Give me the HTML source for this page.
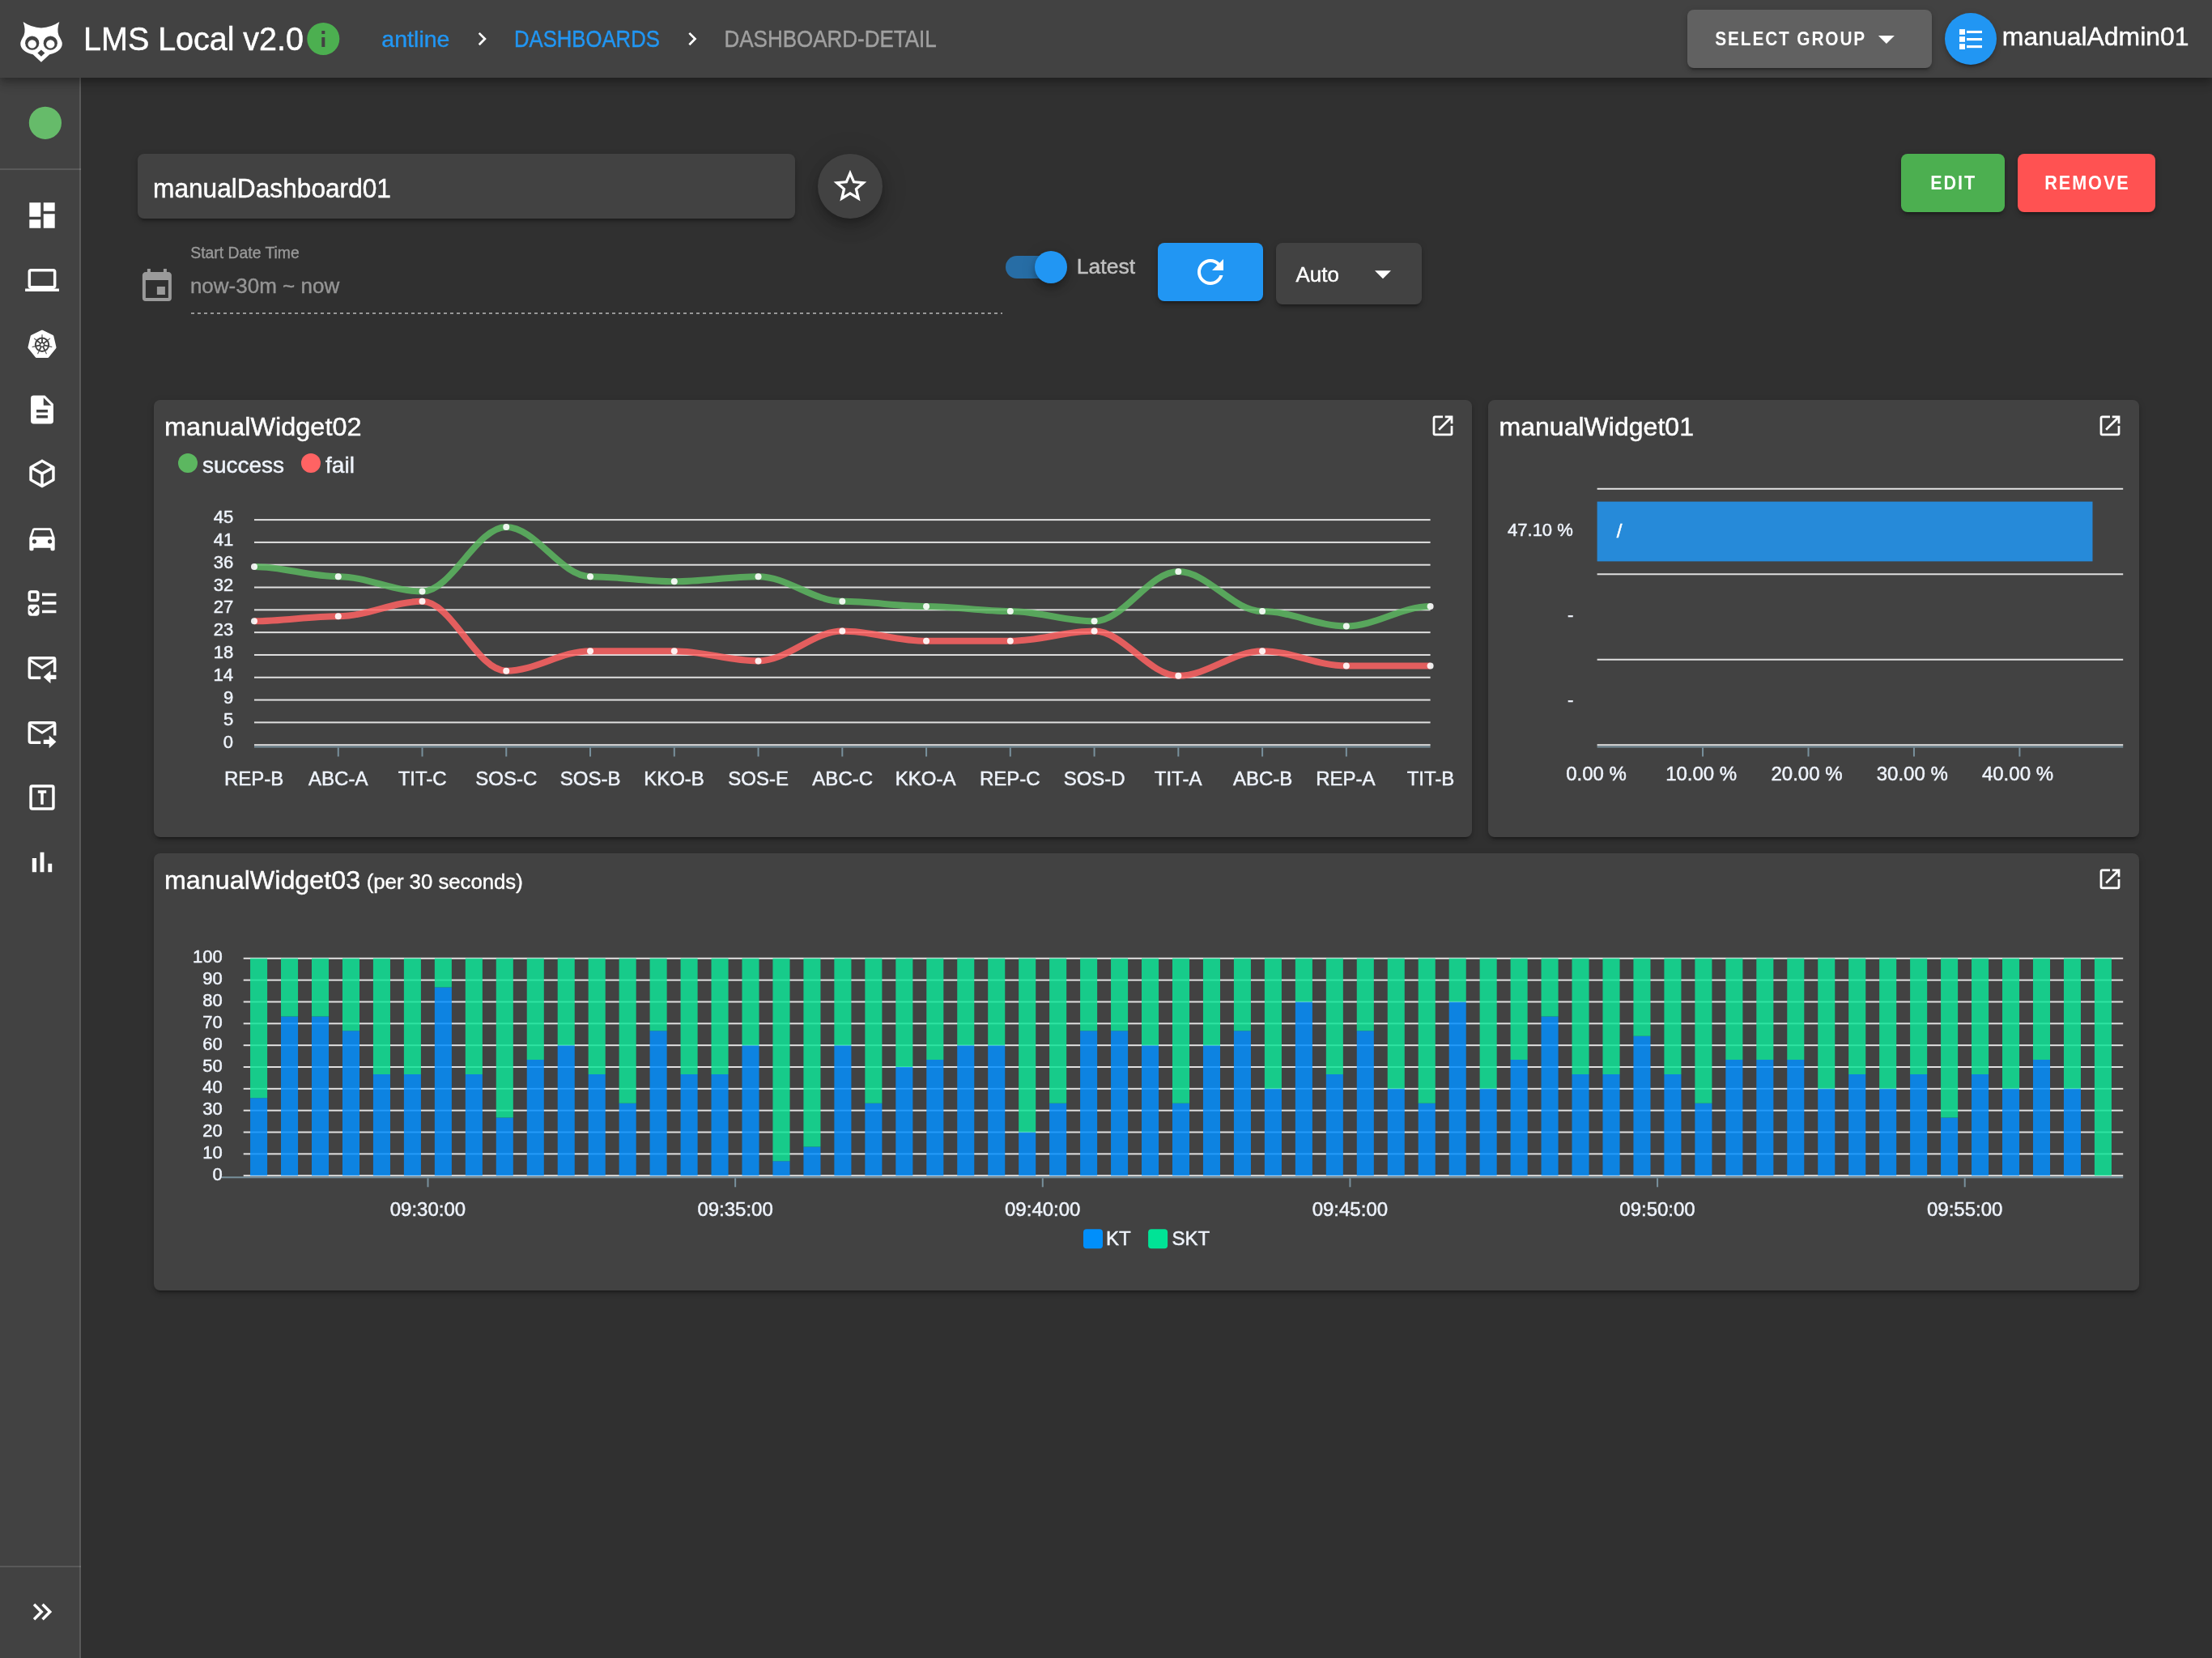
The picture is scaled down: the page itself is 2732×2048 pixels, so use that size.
<!DOCTYPE html>
<html lang="en"><head><meta charset="utf-8"><title>LMS Local v2.0 - Dashboard Detail</title>
<style>
html,body{margin:0;padding:0}
html{background:#303030}
body{width:2732px;height:2048px;overflow:hidden;position:relative;background:#303030;font-family:"Liberation Sans",sans-serif;color:#fff}
.a{position:absolute;box-sizing:border-box}
.s{background:#424242}
.e2{box-shadow:0 6px 2px -4px rgba(0,0,0,.2),0 4px 4px 0 rgba(0,0,0,.14),0 2px 10px 0 rgba(0,0,0,.12)}
.e4{box-shadow:0 4px 8px -2px rgba(0,0,0,.2),0 8px 10px 0 rgba(0,0,0,.14),0 2px 20px 0 rgba(0,0,0,.12)}
.e6{box-shadow:0 6px 10px -2px rgba(0,0,0,.2),0 12px 20px 0 rgba(0,0,0,.14),0 2px 36px 0 rgba(0,0,0,.12)}
.r8{border-radius:8px}
#ov{position:absolute;left:0;top:0;z-index:20;transform:translateZ(0);will-change:transform}
#ov text{font-family:"Liberation Sans",sans-serif;white-space:pre}
</style></head><body>
<nav class="a s" style="left:0;top:96px;width:100px;height:1952px;border-right:2px solid #595959;z-index:3">
 <div class="a" style="left:0;top:112px;width:100px;height:2px;background:rgba(255,255,255,.12)"></div>
 <div class="a" style="left:0;top:1838px;width:100px;height:2px;background:rgba(255,255,255,.12)"></div>
</nav>
<header class="a s e4" style="left:0;top:0;width:2732px;height:96px;z-index:5">
 <div class="a r8 e2" style="left:2084px;top:12px;width:302px;height:72px;background:#616161"></div>
 <div class="a e2" style="left:2402px;top:16px;width:64px;height:64px;border-radius:50%;background:#2196F3"></div>
</header>
<main>
 <div class="a s r8 e2" style="left:170px;top:190px;width:812px;height:80px"></div>
 <div class="a s e6" style="left:1010px;top:190px;width:80px;height:80px;border-radius:50%"></div>
 <div class="a r8 e2" style="left:2348px;top:190px;width:128px;height:72px;background:#4CAF50"></div>
 <div class="a r8 e2" style="left:2492px;top:190px;width:170px;height:72px;background:#FF5252"></div>
 <div class="a" style="left:236px;top:386px;width:1002px;height:2px;background:repeating-linear-gradient(to right,#979797 0,#979797 4px,transparent 4px,transparent 8px)"></div>
 <div class="a" style="left:1242px;top:316px;width:72px;height:28px;border-radius:14px;background:#276da5"></div>
 <div class="a e4" style="left:1278px;top:310px;width:40px;height:40px;border-radius:50%;background:#2196F3"></div>
 <div class="a r8 e2" style="left:1430px;top:300px;width:130px;height:72px;background:#2196F3"></div>
 <div class="a s r8 e2" style="left:1576px;top:300px;width:180px;height:76px"></div>
 <section class="a s r8 e2" style="left:190px;top:494px;width:1628px;height:540px"></section>
 <section class="a s r8 e2" style="left:1838px;top:494px;width:804px;height:540px"></section>
 <section class="a s r8 e2" style="left:190px;top:1054px;width:2452px;height:540px"></section>
</main>
<svg id="ov" width="2732" height="2048" viewBox="0 0 2732 2048">
<text transform="translate(103.12,61.95) scale(0.9575,1)" fill="#fff" stroke="#fff" stroke-width="0.53" style="font-size:41.19px;">LMS Local v2.0</text>
<text transform="translate(471.37,57.90) scale(1.0202,1)" fill="#2196F3" stroke="#2196F3" stroke-width="0.42" style="font-size:28.0px;">antline</text>
<text transform="translate(634.98,57.90) scale(0.8878,1)" fill="#2196F3" stroke="#2196F3" stroke-width="0.43" style="font-size:28.94px;">DASHBOARDS</text>
<text transform="translate(894.46,57.90) scale(0.8981,1)" fill="#a0a0a0" stroke="#a0a0a0" stroke-width="0.43" style="font-size:28.94px;">DASHBOARD-DETAIL</text>
<text transform="translate(2118.26,56.15) scale(0.8689,1)" fill="#fff" style="font-size:23.98px;font-weight:700;letter-spacing:2.158px;">SELECT GROUP</text>
<text transform="translate(2472.82,55.60) scale(0.9920,1)" fill="#fff" stroke="#fff" stroke-width="0.46" style="font-size:32.19px;">manualAdmin01</text>
<path fill="#fff" d="M28.6,26.9 Q38.5,33.8 50.9,34.4 Q63.3,33.8 73.3,26.9 Q69.8,37 72.6,44 Q76.2,50 76.8,53 Q77.2,63.5 61.2,67.2 L50.9,76.8 L40.7,67.2 Q24.8,63.5 25.3,53 Q25.8,50 29.4,44 Q32.2,37 28.6,26.9 Z"/>
<circle cx="39.7" cy="53.2" r="8.6" fill="#424242"/><circle cx="39.7" cy="54.4" r="5.2" fill="#fff"/>
<circle cx="62.3" cy="53.2" r="8.6" fill="#424242"/><circle cx="62.3" cy="54.4" r="5.2" fill="#fff"/>
<path fill="#424242" d="M50.9,61.4 L55.4,65.5 L50.9,69.7 L46.4,65.5 Z"/>
<path transform="translate(375.30,24.00) scale(2.0000)" fill="#4CAF50"  d="M13,9H11V7H13M13,17H11V11H13M12,2A10,10 0 0,0 2,12A10,10 0 0,0 12,22A10,10 0 0,0 22,12A10,10 0 0,0 12,2Z"/>
<path transform="translate(579.08,31.73) scale(1.3600)" fill="#fff"  d="M8.59,16.58L13.17,12L8.59,7.41L10,6L16,12L10,18L8.59,16.58Z"/>
<path transform="translate(838.68,31.73) scale(1.3600)" fill="#fff"  d="M8.59,16.58L13.17,12L8.59,7.41L10,6L16,12L10,18L8.59,16.58Z"/>
<path transform="translate(2305.90,23.90) scale(2.0000)" fill="#fff"  d="M7,10L12,15L17,10H7Z"/>
<rect x="2420" y="36.1" width="7" height="6.7" fill="#fff"/>
<rect x="2420" y="45.1" width="7" height="6.7" fill="#fff"/>
<rect x="2420" y="54.2" width="7" height="6.8" fill="#fff"/>
<rect x="2429" y="37.9" width="19" height="3.1" fill="#fff"/>
<rect x="2429" y="47.0" width="19" height="3.1" fill="#fff"/>
<rect x="2429" y="56.05" width="19" height="3.1" fill="#fff"/>
<circle cx="55.9" cy="151.8" r="20.1" fill="#66BB6A"/>
<path transform="translate(31.10,245.10) scale(1.7417)" fill="#fff"  d="M13,3V9H21V3M13,21H21V11H13M3,21H11V15H3M3,13H11V3H3V13Z"/>
<path transform="translate(31.10,325.10) scale(1.7417)" fill="#fff"  d="M4,6H20V16H4M20,18A2,2 0 0,0 22,16V6C22,4.89 21.1,4 20,4H4C2.89,4 2,4.89 2,6V16A2,2 0 0,0 4,18H0V20H24V18H20Z"/>
<polygon fill="#fff" stroke="#fff" stroke-width="3" stroke-linejoin="round" points="52.0,409.2 64.8,415.4 68.0,429.2 59.1,440.4 44.9,440.4 36.0,429.2 39.2,415.4"/>
<circle cx="52.0" cy="425.8" r="8.2" fill="none" stroke="#424242" stroke-width="2"/>
<line x1="52.0" y1="423.6" x2="52.0" y2="417.6" stroke="#424242" stroke-width="1.8"/>
<line x1="52.0" y1="417.6" x2="52.0" y2="413.2" stroke="#424242" stroke-width="1.2" stroke-opacity="0.85"/>
<line x1="53.7" y1="424.4" x2="58.4" y2="420.7" stroke="#424242" stroke-width="1.8"/>
<line x1="58.4" y1="420.7" x2="61.9" y2="417.9" stroke="#424242" stroke-width="1.2" stroke-opacity="0.85"/>
<line x1="54.1" y1="426.3" x2="60.0" y2="427.6" stroke="#424242" stroke-width="1.8"/>
<line x1="60.0" y1="427.6" x2="64.3" y2="428.6" stroke="#424242" stroke-width="1.2" stroke-opacity="0.85"/>
<line x1="53.0" y1="427.8" x2="55.6" y2="433.2" stroke="#424242" stroke-width="1.8"/>
<line x1="55.6" y1="433.2" x2="57.5" y2="437.2" stroke="#424242" stroke-width="1.2" stroke-opacity="0.85"/>
<line x1="51.0" y1="427.8" x2="48.4" y2="433.2" stroke="#424242" stroke-width="1.8"/>
<line x1="48.4" y1="433.2" x2="46.5" y2="437.2" stroke="#424242" stroke-width="1.2" stroke-opacity="0.85"/>
<line x1="49.9" y1="426.3" x2="44.0" y2="427.6" stroke="#424242" stroke-width="1.8"/>
<line x1="44.0" y1="427.6" x2="39.7" y2="428.6" stroke="#424242" stroke-width="1.2" stroke-opacity="0.85"/>
<line x1="50.3" y1="424.4" x2="45.6" y2="420.7" stroke="#424242" stroke-width="1.8"/>
<line x1="45.6" y1="420.7" x2="42.1" y2="417.9" stroke="#424242" stroke-width="1.2" stroke-opacity="0.85"/>
<circle cx="52.0" cy="425.8" r="2.6" fill="none" stroke="#424242" stroke-width="1.4"/>
<path transform="translate(31.10,485.10) scale(1.7417)" fill="#fff"  d="M14,2H6A2,2 0 0,0 4,4V20A2,2 0 0,0 6,22H18A2,2 0 0,0 20,20V8L14,2M16,18H8V16H16V18M16,14H8V12H16V14M13,9V3.5L18.5,9H13Z"/>
<path transform="translate(31.10,564.10) scale(1.7417)" fill="#fff"  d="M21,16.5C21,16.88 20.79,17.21 20.47,17.38L12.57,21.82C12.41,21.94 12.21,22 12,22C11.79,22 11.59,21.94 11.43,21.82L3.53,17.38C3.21,17.21 3,16.88 3,16.5V7.5C3,7.12 3.21,6.79 3.53,6.62L11.43,2.18C11.59,2.06 11.79,2 12,2C12.21,2 12.41,2.06 12.57,2.18L20.47,6.62C20.79,6.79 21,7.12 21,7.5V16.5M12,4.15L6.04,7.5L12,10.85L17.96,7.5L12,4.15M5,15.91L11,19.29V12.58L5,9.21V15.91M19,15.91V9.21L13,12.58V19.29L19,15.91Z"/>
<path transform="translate(31.10,643.60) scale(1.7417)" fill="#fff"  d="M5,11L6.5,6.5H17.5L19,11M17.5,16A1.5,1.5 0 0,1 16,14.5A1.5,1.5 0 0,1 17.5,13A1.5,1.5 0 0,1 19,14.5A1.5,1.5 0 0,1 17.5,16M6.5,16A1.5,1.5 0 0,1 5,14.5A1.5,1.5 0 0,1 6.5,13A1.5,1.5 0 0,1 8,14.5A1.5,1.5 0 0,1 6.5,16M18.92,6C18.72,5.42 18.16,5 17.5,5H6.5C5.84,5 5.28,5.42 5.08,6L3,12V20A1,1 0 0,0 4,21H5A1,1 0 0,0 6,20V19H18V20A1,1 0 0,0 19,21H20A1,1 0 0,0 21,20V12L18.92,6Z"/>
<path transform="translate(31.10,724.10) scale(1.7417)" fill="#fff" fill-rule="evenodd" d="M4 13C2.89 13 2 13.89 2 15V19C2 20.11 2.89 21 4 21H8C9.11 21 10 20.11 10 19V15C10 13.89 9.11 13 8 13M8.2 14.5L9.26 15.55L5.27 19.5L2.74 16.95L3.81 15.9L5.28 17.39M4 3C2.89 3 2 3.89 2 5V9C2 10.11 2.89 11 4 11H8C9.11 11 10 10.11 10 9V5C10 3.89 9.11 3 8 3M4 5H8V9H4M12 5H22V7H12M12 19V17H22V19M12 11H22V13H12Z"/>
<path transform="translate(31.10,804.10) scale(1.7417)" fill="#fff" fill-rule="evenodd" d="M22 20H18V23L13 18.5L18 14V17H22V20Z M20 4H4A2 2 0 0 0 2 6V18A2 2 0 0 0 4 20H11V18H4V8L12 13L20 8V15H22V6A2 2 0 0 0 20 4M20 6L12 11L4 6Z"/>
<path transform="translate(31.10,884.10) scale(1.7417)" fill="#fff" fill-rule="evenodd" d="M13 17H17V14L22 18.5L17 23V20H13V17Z M20 4H4A2 2 0 0 0 2 6V18A2 2 0 0 0 4 20H11V18H4V8L12 13L20 8V14H22V6A2 2 0 0 0 20 4M20 6L12 11L4 6Z"/>
<path transform="translate(31.10,964.10) scale(1.7417)" fill="#fff" fill-rule="evenodd" d="M9,7V9H11V17H13V9H15V7H9M5,3H19A2,2 0 0,1 21,5V19A2,2 0 0,1 19,21H5A2,2 0 0,1 3,19V5A2,2 0 0,1 5,3M5,5V19H19V5H5Z"/>
<path transform="translate(31.10,1044.10) scale(1.7417)" fill="#fff"  d="M5 9.2h3V19H5zM10.6 5h2.8v14h-2.8zm5.6 8H19v6h-2.8z"/>
<path transform="translate(31.10,1970.10) scale(1.7417)" fill="#fff"  d="M5.59,7.41L7,6L13,12L7,18L5.59,16.59L10.17,12L5.59,7.41M11.59,7.41L13,6L19,12L13,18L11.59,16.59L16.17,12L11.59,7.41Z"/>
<text transform="translate(189.04,243.70) scale(0.9553,1)" fill="#fff" stroke="#fff" stroke-width="0.47" style="font-size:33.15px;">manualDashboard01</text>
<path transform="translate(1025.46,205.60) scale(2.0417)" fill="#fff"  d="M12,15.39L8.24,17.66L9.23,13.38L5.91,10.5L10.29,10.13L12,6.09L13.71,10.13L18.09,10.5L14.77,13.38L15.76,17.66M22,9.24L14.81,8.63L12,2L9.19,8.63L2,9.24L7.45,13.97L5.82,21L12,17.27L18.18,21L16.54,13.97L22,9.24Z"/>
<text transform="translate(2384.15,234.20) scale(0.8994,1)" fill="#fff" style="font-size:23.98px;font-weight:700;letter-spacing:2.158px;">EDIT</text>
<text transform="translate(2525.14,234.20) scale(0.9037,1)" fill="#fff" style="font-size:23.98px;font-weight:700;letter-spacing:2.158px;">REMOVE</text>
<path transform="translate(169.90,330.00) scale(2.0000)" fill="#9a9a9a"  d="M19,19H5V8H19M16,1V3H8V1H6V3H5C3.89,3 3,3.89 3,5V19A2,2 0 0,0 5,21H19A2,2 0 0,0 21,19V5C21,3.89 20.1,3 19,3H18V1M17,12H12V17H17V12Z"/>
<text transform="translate(235.22,318.80) scale(0.9789,1)" fill="#999999" stroke="#999999" stroke-width="0.36" style="font-size:19.8px;">Start Date Time</text>
<text transform="translate(234.88,362.10) scale(1.0002,1)" fill="#959595" stroke="#959595" stroke-width="0.41" style="font-size:26.0px;">now-30m ~ now</text>
<text transform="translate(1329.87,337.80) scale(1.0078,1)" fill="#c1c1c1" stroke="#c1c1c1" stroke-width="0.41" style="font-size:26.29px;">Latest</text>
<path transform="translate(1471.00,312.00) scale(2.0000)" fill="#fff"  d="M17.65,6.35C16.2,4.9 14.21,4 12,4A8,8 0 0,0 4,12A8,8 0 0,0 12,20C15.73,20 18.84,17.45 19.73,14H17.65C16.83,16.33 14.61,18 12,18A6,6 0 0,1 6,12A6,6 0 0,1 12,6C13.66,6 15.14,6.69 16.22,7.78L13,11H20V4L17.65,6.35Z"/>
<text transform="translate(1600.60,348.10) scale(0.9780,1)" fill="#fff" stroke="#fff" stroke-width="0.41" style="font-size:26.44px;">Auto</text>
<path transform="translate(1684.00,314.30) scale(2.0000)" fill="#fff"  d="M7,10L12,15L17,10H7Z"/>
<text transform="translate(203.09,537.80) scale(1.0083,1)" fill="#fff" stroke="#fff" stroke-width="0.46" style="font-size:32.18px;">manualWidget02</text>
<text transform="translate(1851.51,537.80) scale(0.9960,1)" fill="#fff" stroke="#fff" stroke-width="0.46" style="font-size:32.18px;">manualWidget01</text>
<text transform="translate(203.00,1097.60) scale(1.0026,1)" fill="#fff" stroke="#fff" stroke-width="0.46" style="font-size:32.18px;">manualWidget03</text>
<text transform="translate(452.69,1097.60) scale(1.0061,1)" fill="#fff" stroke="#fff" stroke-width="0.4" style="font-size:25.6px;">(per 30 seconds)</text>
<path transform="translate(1765.50,509.40) scale(1.3750)" fill="#fff"  d="M14,3V5H17.59L7.76,14.83L9.17,16.24L19,6.41V10H21V3M19,19H5V5H12V3H5C3.89,3 3,3.9 3,5V19A2,2 0 0,0 5,21H19A2,2 0 0,0 21,19V12H19V19Z"/>
<path transform="translate(2589.50,509.40) scale(1.3750)" fill="#fff"  d="M14,3V5H17.59L7.76,14.83L9.17,16.24L19,6.41V10H21V3M19,19H5V5H12V3H5C3.89,3 3,3.9 3,5V19A2,2 0 0,0 5,21H19A2,2 0 0,0 21,19V12H19V19Z"/>
<path transform="translate(2589.50,1069.40) scale(1.3750)" fill="#fff"  d="M14,3V5H17.59L7.76,14.83L9.17,16.24L19,6.41V10H21V3M19,19H5V5H12V3H5C3.89,3 3,3.9 3,5V19A2,2 0 0,0 5,21H19A2,2 0 0,0 21,19V12H19V19Z"/>
<circle cx="232" cy="572" r="12" fill="#5cb760"/>
<text x="249.90" y="583.70" fill="#eef3fb" stroke="#eef3fb" stroke-width="0.5" text-anchor="start" style="font-size:28px">success</text>
<circle cx="383.95" cy="572" r="12" fill="#ff6363"/>
<text x="402.07" y="583.70" fill="#eef3fb" stroke="#eef3fb" stroke-width="0.5" text-anchor="start" style="font-size:28px">fail</text>
<rect x="314.0" y="641.10" width="1452.6" height="2" fill="#e0e0e0"/>
<rect x="314.0" y="668.91" width="1452.6" height="2" fill="#e0e0e0"/>
<rect x="314.0" y="696.72" width="1452.6" height="2" fill="#e0e0e0"/>
<rect x="314.0" y="724.53" width="1452.6" height="2" fill="#e0e0e0"/>
<rect x="314.0" y="752.34" width="1452.6" height="2" fill="#e0e0e0"/>
<rect x="314.0" y="780.15" width="1452.6" height="2" fill="#e0e0e0"/>
<rect x="314.0" y="807.96" width="1452.6" height="2" fill="#e0e0e0"/>
<rect x="314.0" y="835.77" width="1452.6" height="2" fill="#e0e0e0"/>
<rect x="314.0" y="863.58" width="1452.6" height="2" fill="#e0e0e0"/>
<rect x="314.0" y="891.39" width="1452.6" height="2" fill="#e0e0e0"/>
<rect x="314.0" y="919.20" width="1452.6" height="2" fill="#e0e0e0"/>
<rect x="314.0" y="921.5" width="1452.6" height="2" fill="#78909C"/>
<text x="263.73" y="646.20" fill="#eef3fb" stroke="#eef3fb" stroke-width="0.5" text-anchor="start" style="font-size:22px">45</text>
<text x="263.85" y="674.01" fill="#eef3fb" stroke="#eef3fb" stroke-width="0.5" text-anchor="start" style="font-size:22px">41</text>
<text x="263.73" y="701.82" fill="#eef3fb" stroke="#eef3fb" stroke-width="0.5" text-anchor="start" style="font-size:22px">36</text>
<text x="263.85" y="729.63" fill="#eef3fb" stroke="#eef3fb" stroke-width="0.5" text-anchor="start" style="font-size:22px">32</text>
<text x="263.85" y="757.44" fill="#eef3fb" stroke="#eef3fb" stroke-width="0.5" text-anchor="start" style="font-size:22px">27</text>
<text x="263.73" y="785.25" fill="#eef3fb" stroke="#eef3fb" stroke-width="0.5" text-anchor="start" style="font-size:22px">23</text>
<text x="263.73" y="813.06" fill="#eef3fb" stroke="#eef3fb" stroke-width="0.5" text-anchor="start" style="font-size:22px">18</text>
<text x="263.48" y="840.87" fill="#eef3fb" stroke="#eef3fb" stroke-width="0.5" text-anchor="start" style="font-size:22px">14</text>
<text x="276.10" y="868.68" fill="#eef3fb" stroke="#eef3fb" stroke-width="0.5" text-anchor="start" style="font-size:22px">9</text>
<text x="275.98" y="896.49" fill="#eef3fb" stroke="#eef3fb" stroke-width="0.5" text-anchor="start" style="font-size:22px">5</text>
<text x="275.85" y="924.30" fill="#eef3fb" stroke="#eef3fb" stroke-width="0.5" text-anchor="start" style="font-size:22px">0</text>
<text x="277.00" y="969.80" fill="#eef3fb" stroke="#eef3fb" stroke-width="0.5" text-anchor="start" style="font-size:24px">REP-B</text>
<rect x="416.76" y="923.5" width="2" height="11" fill="#78909C"/>
<text x="381.07" y="969.80" fill="#eef3fb" stroke="#eef3fb" stroke-width="0.5" text-anchor="start" style="font-size:24px">ABC-A</text>
<rect x="520.51" y="923.5" width="2" height="11" fill="#78909C"/>
<text x="491.70" y="969.80" fill="#eef3fb" stroke="#eef3fb" stroke-width="0.5" text-anchor="start" style="font-size:24px">TIT-C</text>
<rect x="624.27" y="923.5" width="2" height="11" fill="#78909C"/>
<text x="587.21" y="969.80" fill="#eef3fb" stroke="#eef3fb" stroke-width="0.5" text-anchor="start" style="font-size:24px">SOS-C</text>
<rect x="728.03" y="923.5" width="2" height="11" fill="#78909C"/>
<text x="691.84" y="969.80" fill="#eef3fb" stroke="#eef3fb" stroke-width="0.5" text-anchor="start" style="font-size:24px">SOS-B</text>
<rect x="831.79" y="923.5" width="2" height="11" fill="#78909C"/>
<text x="795.16" y="969.80" fill="#eef3fb" stroke="#eef3fb" stroke-width="0.5" text-anchor="start" style="font-size:24px">KKO-B</text>
<rect x="935.54" y="923.5" width="2" height="11" fill="#78909C"/>
<text x="899.23" y="969.80" fill="#eef3fb" stroke="#eef3fb" stroke-width="0.5" text-anchor="start" style="font-size:24px">SOS-E</text>
<rect x="1039.30" y="923.5" width="2" height="11" fill="#78909C"/>
<text x="1003.36" y="969.80" fill="#eef3fb" stroke="#eef3fb" stroke-width="0.5" text-anchor="start" style="font-size:24px">ABC-C</text>
<rect x="1143.06" y="923.5" width="2" height="11" fill="#78909C"/>
<text x="1105.81" y="969.80" fill="#eef3fb" stroke="#eef3fb" stroke-width="0.5" text-anchor="start" style="font-size:24px">KKO-A</text>
<rect x="1246.81" y="923.5" width="2" height="11" fill="#78909C"/>
<text x="1209.94" y="969.80" fill="#eef3fb" stroke="#eef3fb" stroke-width="0.5" text-anchor="start" style="font-size:24px">REP-C</text>
<rect x="1350.57" y="923.5" width="2" height="11" fill="#78909C"/>
<text x="1313.63" y="969.80" fill="#eef3fb" stroke="#eef3fb" stroke-width="0.5" text-anchor="start" style="font-size:24px">SOS-D</text>
<rect x="1454.33" y="923.5" width="2" height="11" fill="#78909C"/>
<text x="1425.77" y="969.80" fill="#eef3fb" stroke="#eef3fb" stroke-width="0.5" text-anchor="start" style="font-size:24px">TIT-A</text>
<rect x="1558.09" y="923.5" width="2" height="11" fill="#78909C"/>
<text x="1523.02" y="969.80" fill="#eef3fb" stroke="#eef3fb" stroke-width="0.5" text-anchor="start" style="font-size:24px">ABC-B</text>
<rect x="1661.84" y="923.5" width="2" height="11" fill="#78909C"/>
<text x="1625.22" y="969.80" fill="#eef3fb" stroke="#eef3fb" stroke-width="0.5" text-anchor="start" style="font-size:24px">REP-A</text>
<text x="1737.66" y="969.80" fill="#eef3fb" stroke="#eef3fb" stroke-width="0.5" text-anchor="start" style="font-size:24px">TIT-B</text>
<path d="M314.00,699.92 C350.31,699.92 381.44,712.18 417.76,712.18 C454.07,712.18 485.20,730.57 521.51,730.57 C557.83,730.57 588.96,650.88 625.27,650.88 C661.59,650.88 692.71,712.18 729.03,712.18 C765.34,712.18 796.47,718.31 832.79,718.31 C869.10,718.31 900.23,712.18 936.54,712.18 C972.86,712.18 1003.98,742.83 1040.30,742.83 C1076.62,742.83 1107.74,748.96 1144.06,748.96 C1180.37,748.96 1211.50,755.09 1247.81,755.09 C1284.13,755.09 1315.26,767.35 1351.57,767.35 C1387.89,767.35 1419.01,706.05 1455.33,706.05 C1491.64,706.05 1522.77,755.09 1559.09,755.09 C1595.40,755.09 1626.53,773.48 1662.84,773.48 C1699.16,773.48 1730.28,748.96 1766.60,748.96" fill="none" stroke="#5cb760" stroke-opacity="0.85" stroke-width="8" stroke-linecap="butt"/>
<path d="M314.00,767.35 C350.31,767.35 381.44,761.22 417.76,761.22 C454.07,761.22 485.20,742.83 521.51,742.83 C557.83,742.83 588.96,828.65 625.27,828.65 C661.59,828.65 692.71,804.13 729.03,804.13 C765.34,804.13 796.47,804.13 832.79,804.13 C869.10,804.13 900.23,816.39 936.54,816.39 C972.86,816.39 1003.98,779.61 1040.30,779.61 C1076.62,779.61 1107.74,791.87 1144.06,791.87 C1180.37,791.87 1211.50,791.87 1247.81,791.87 C1284.13,791.87 1315.26,779.61 1351.57,779.61 C1387.89,779.61 1419.01,834.78 1455.33,834.78 C1491.64,834.78 1522.77,804.13 1559.09,804.13 C1595.40,804.13 1626.53,822.52 1662.84,822.52 C1699.16,822.52 1730.28,822.52 1766.60,822.52" fill="none" stroke="#ff6363" stroke-opacity="0.85" stroke-width="8" stroke-linecap="butt"/>
<circle cx="314.00" cy="699.92" r="4" fill="#fff" fill-opacity="0.9"/>
<circle cx="417.76" cy="712.18" r="4" fill="#fff" fill-opacity="0.9"/>
<circle cx="521.51" cy="730.57" r="4" fill="#fff" fill-opacity="0.9"/>
<circle cx="625.27" cy="650.88" r="4" fill="#fff" fill-opacity="0.9"/>
<circle cx="729.03" cy="712.18" r="4" fill="#fff" fill-opacity="0.9"/>
<circle cx="832.79" cy="718.31" r="4" fill="#fff" fill-opacity="0.9"/>
<circle cx="936.54" cy="712.18" r="4" fill="#fff" fill-opacity="0.9"/>
<circle cx="1040.30" cy="742.83" r="4" fill="#fff" fill-opacity="0.9"/>
<circle cx="1144.06" cy="748.96" r="4" fill="#fff" fill-opacity="0.9"/>
<circle cx="1247.81" cy="755.09" r="4" fill="#fff" fill-opacity="0.9"/>
<circle cx="1351.57" cy="767.35" r="4" fill="#fff" fill-opacity="0.9"/>
<circle cx="1455.33" cy="706.05" r="4" fill="#fff" fill-opacity="0.9"/>
<circle cx="1559.09" cy="755.09" r="4" fill="#fff" fill-opacity="0.9"/>
<circle cx="1662.84" cy="773.48" r="4" fill="#fff" fill-opacity="0.9"/>
<circle cx="1766.60" cy="748.96" r="4" fill="#fff" fill-opacity="0.9"/>
<circle cx="314.00" cy="767.35" r="4" fill="#fff" fill-opacity="0.9"/>
<circle cx="417.76" cy="761.22" r="4" fill="#fff" fill-opacity="0.9"/>
<circle cx="521.51" cy="742.83" r="4" fill="#fff" fill-opacity="0.9"/>
<circle cx="625.27" cy="828.65" r="4" fill="#fff" fill-opacity="0.9"/>
<circle cx="729.03" cy="804.13" r="4" fill="#fff" fill-opacity="0.9"/>
<circle cx="832.79" cy="804.13" r="4" fill="#fff" fill-opacity="0.9"/>
<circle cx="936.54" cy="816.39" r="4" fill="#fff" fill-opacity="0.9"/>
<circle cx="1040.30" cy="779.61" r="4" fill="#fff" fill-opacity="0.9"/>
<circle cx="1144.06" cy="791.87" r="4" fill="#fff" fill-opacity="0.9"/>
<circle cx="1247.81" cy="791.87" r="4" fill="#fff" fill-opacity="0.9"/>
<circle cx="1351.57" cy="779.61" r="4" fill="#fff" fill-opacity="0.9"/>
<circle cx="1455.33" cy="834.78" r="4" fill="#fff" fill-opacity="0.9"/>
<circle cx="1559.09" cy="804.13" r="4" fill="#fff" fill-opacity="0.9"/>
<circle cx="1662.84" cy="822.52" r="4" fill="#fff" fill-opacity="0.9"/>
<circle cx="1766.60" cy="822.52" r="4" fill="#fff" fill-opacity="0.9"/>
<rect x="1972.6" y="602.80" width="649.6" height="2" fill="#e0e0e0"/>
<rect x="1972.6" y="708.27" width="649.6" height="2" fill="#e0e0e0"/>
<rect x="1972.6" y="813.74" width="649.6" height="2" fill="#e0e0e0"/>
<rect x="1972.6" y="919.21" width="649.6" height="2" fill="#e0e0e0"/>
<rect x="1972.6" y="921.5" width="649.6" height="2" fill="#78909C"/>
<rect x="1972.6" y="619.6" width="611.9" height="73.8" fill="#2196F3" fill-opacity="0.85"/>
<text x="1996.85" y="664.00" fill="#fff" stroke="#fff" stroke-width="0.5" text-anchor="start" style="font-size:24px">/</text>
<text x="1862.05" y="662.30" fill="#eef3fb" stroke="#eef3fb" stroke-width="0.5" text-anchor="start" style="font-size:22px">47.10 %</text>
<text x="1935.97" y="767.20" fill="#eef3fb" stroke="#eef3fb" stroke-width="0.5" text-anchor="start" style="font-size:22px">-</text>
<text x="1935.97" y="872.30" fill="#eef3fb" stroke="#eef3fb" stroke-width="0.5" text-anchor="start" style="font-size:22px">-</text>
<text x="1934.22" y="964.10" fill="#eef3fb" stroke="#eef3fb" stroke-width="0.5" text-anchor="start" style="font-size:24px">0.00 %</text>
<rect x="2102.05" y="923.5" width="2" height="11" fill="#78909C"/>
<text x="2057.15" y="964.10" fill="#eef3fb" stroke="#eef3fb" stroke-width="0.5" text-anchor="start" style="font-size:24px">10.00 %</text>
<rect x="2232.50" y="923.5" width="2" height="11" fill="#78909C"/>
<text x="2187.51" y="964.10" fill="#eef3fb" stroke="#eef3fb" stroke-width="0.5" text-anchor="start" style="font-size:24px">20.00 %</text>
<rect x="2362.95" y="923.5" width="2" height="11" fill="#78909C"/>
<text x="2317.69" y="964.10" fill="#eef3fb" stroke="#eef3fb" stroke-width="0.5" text-anchor="start" style="font-size:24px">30.00 %</text>
<rect x="2493.40" y="923.5" width="2" height="11" fill="#78909C"/>
<text x="2447.93" y="964.10" fill="#eef3fb" stroke="#eef3fb" stroke-width="0.5" text-anchor="start" style="font-size:24px">40.00 %</text>
<rect x="300.7" y="1182.80" width="2321.5" height="2" fill="#e0e0e0"/>
<rect x="300.7" y="1209.64" width="2321.5" height="2" fill="#e0e0e0"/>
<rect x="300.7" y="1236.48" width="2321.5" height="2" fill="#e0e0e0"/>
<rect x="300.7" y="1263.32" width="2321.5" height="2" fill="#e0e0e0"/>
<rect x="300.7" y="1290.16" width="2321.5" height="2" fill="#e0e0e0"/>
<rect x="300.7" y="1317.00" width="2321.5" height="2" fill="#e0e0e0"/>
<rect x="300.7" y="1343.84" width="2321.5" height="2" fill="#e0e0e0"/>
<rect x="300.7" y="1370.68" width="2321.5" height="2" fill="#e0e0e0"/>
<rect x="300.7" y="1397.52" width="2321.5" height="2" fill="#e0e0e0"/>
<rect x="300.7" y="1424.36" width="2321.5" height="2" fill="#e0e0e0"/>
<rect x="300.7" y="1451.20" width="2321.5" height="2" fill="#e0e0e0"/>
<rect x="274" y="1453.3" width="2348.2" height="2" fill="#78909C"/>
<text x="237.95" y="1189.30" fill="#eef3fb" stroke="#eef3fb" stroke-width="0.5" text-anchor="start" style="font-size:22px">100</text>
<text x="250.20" y="1216.14" fill="#eef3fb" stroke="#eef3fb" stroke-width="0.5" text-anchor="start" style="font-size:22px">90</text>
<text x="250.20" y="1242.98" fill="#eef3fb" stroke="#eef3fb" stroke-width="0.5" text-anchor="start" style="font-size:22px">80</text>
<text x="250.20" y="1269.82" fill="#eef3fb" stroke="#eef3fb" stroke-width="0.5" text-anchor="start" style="font-size:22px">70</text>
<text x="250.20" y="1296.66" fill="#eef3fb" stroke="#eef3fb" stroke-width="0.5" text-anchor="start" style="font-size:22px">60</text>
<text x="250.20" y="1323.50" fill="#eef3fb" stroke="#eef3fb" stroke-width="0.5" text-anchor="start" style="font-size:22px">50</text>
<text x="250.20" y="1350.34" fill="#eef3fb" stroke="#eef3fb" stroke-width="0.5" text-anchor="start" style="font-size:22px">40</text>
<text x="250.20" y="1377.18" fill="#eef3fb" stroke="#eef3fb" stroke-width="0.5" text-anchor="start" style="font-size:22px">30</text>
<text x="250.20" y="1404.02" fill="#eef3fb" stroke="#eef3fb" stroke-width="0.5" text-anchor="start" style="font-size:22px">20</text>
<text x="250.20" y="1430.86" fill="#eef3fb" stroke="#eef3fb" stroke-width="0.5" text-anchor="start" style="font-size:22px">10</text>
<text x="262.45" y="1457.70" fill="#eef3fb" stroke="#eef3fb" stroke-width="0.5" text-anchor="start" style="font-size:22px">0</text>
<path fill="#038efd" fill-opacity="0.85" d="M309.06,1356.35h21.05V1452.2h-21.05zM347.02,1255.38h21.05V1452.2h-21.05zM384.99,1255.38h21.05V1452.2h-21.05zM422.95,1273.26h21.05V1452.2h-21.05zM460.92,1326.94h21.05V1452.2h-21.05zM498.88,1326.94h21.05V1452.2h-21.05zM536.84,1219.58h21.05V1452.2h-21.05zM574.81,1326.94h21.05V1452.2h-21.05zM612.77,1380.62h21.05V1452.2h-21.05zM650.74,1309.06h21.05V1452.2h-21.05zM688.70,1291.16h21.05V1452.2h-21.05zM726.66,1326.94h21.05V1452.2h-21.05zM764.63,1362.74h21.05V1452.2h-21.05zM802.59,1273.26h21.05V1452.2h-21.05zM840.56,1326.94h21.05V1452.2h-21.05zM878.52,1326.94h21.05V1452.2h-21.05zM916.48,1291.16h21.05V1452.2h-21.05zM954.45,1434.30h21.05V1452.2h-21.05zM992.41,1416.42h21.05V1452.2h-21.05zM1030.38,1291.16h21.05V1452.2h-21.05zM1068.34,1362.74h21.05V1452.2h-21.05zM1106.30,1318.00h21.05V1452.2h-21.05zM1144.27,1309.06h21.05V1452.2h-21.05zM1182.23,1291.16h21.05V1452.2h-21.05zM1220.20,1291.16h21.05V1452.2h-21.05zM1258.16,1398.52h21.05V1452.2h-21.05zM1296.12,1362.74h21.05V1452.2h-21.05zM1334.09,1273.26h21.05V1452.2h-21.05zM1372.05,1273.26h21.05V1452.2h-21.05zM1410.02,1291.16h21.05V1452.2h-21.05zM1447.98,1362.74h21.05V1452.2h-21.05zM1485.94,1291.16h21.05V1452.2h-21.05zM1523.91,1273.26h21.05V1452.2h-21.05zM1561.87,1344.84h21.05V1452.2h-21.05zM1599.84,1237.48h21.05V1452.2h-21.05zM1637.80,1326.94h21.05V1452.2h-21.05zM1675.76,1273.26h21.05V1452.2h-21.05zM1713.73,1344.84h21.05V1452.2h-21.05zM1751.69,1362.74h21.05V1452.2h-21.05zM1789.66,1237.48h21.05V1452.2h-21.05zM1827.62,1344.84h21.05V1452.2h-21.05zM1865.58,1309.06h21.05V1452.2h-21.05zM1903.55,1255.38h21.05V1452.2h-21.05zM1941.51,1326.94h21.05V1452.2h-21.05zM1979.48,1326.94h21.05V1452.2h-21.05zM2017.44,1279.65h21.05V1452.2h-21.05zM2055.40,1326.94h21.05V1452.2h-21.05zM2093.37,1362.74h21.05V1452.2h-21.05zM2131.33,1309.06h21.05V1452.2h-21.05zM2169.30,1309.06h21.05V1452.2h-21.05zM2207.26,1309.06h21.05V1452.2h-21.05zM2245.22,1344.84h21.05V1452.2h-21.05zM2283.19,1326.94h21.05V1452.2h-21.05zM2321.15,1344.84h21.05V1452.2h-21.05zM2359.12,1326.94h21.05V1452.2h-21.05zM2397.08,1380.62h21.05V1452.2h-21.05zM2435.04,1326.94h21.05V1452.2h-21.05zM2473.01,1344.84h21.05V1452.2h-21.05zM2510.97,1309.06h21.05V1452.2h-21.05zM2548.94,1344.84h21.05V1452.2h-21.05z"/>
<path fill="#0fe397" fill-opacity="0.85" d="M309.06,1183.8h21.05V1356.35h-21.05zM347.02,1183.8h21.05V1255.38h-21.05zM384.99,1183.8h21.05V1255.38h-21.05zM422.95,1183.8h21.05V1273.26h-21.05zM460.92,1183.8h21.05V1326.94h-21.05zM498.88,1183.8h21.05V1326.94h-21.05zM536.84,1183.8h21.05V1219.58h-21.05zM574.81,1183.8h21.05V1326.94h-21.05zM612.77,1183.8h21.05V1380.62h-21.05zM650.74,1183.8h21.05V1309.06h-21.05zM688.70,1183.8h21.05V1291.16h-21.05zM726.66,1183.8h21.05V1326.94h-21.05zM764.63,1183.8h21.05V1362.74h-21.05zM802.59,1183.8h21.05V1273.26h-21.05zM840.56,1183.8h21.05V1326.94h-21.05zM878.52,1183.8h21.05V1326.94h-21.05zM916.48,1183.8h21.05V1291.16h-21.05zM954.45,1183.8h21.05V1434.30h-21.05zM992.41,1183.8h21.05V1416.42h-21.05zM1030.38,1183.8h21.05V1291.16h-21.05zM1068.34,1183.8h21.05V1362.74h-21.05zM1106.30,1183.8h21.05V1318.00h-21.05zM1144.27,1183.8h21.05V1309.06h-21.05zM1182.23,1183.8h21.05V1291.16h-21.05zM1220.20,1183.8h21.05V1291.16h-21.05zM1258.16,1183.8h21.05V1398.52h-21.05zM1296.12,1183.8h21.05V1362.74h-21.05zM1334.09,1183.8h21.05V1273.26h-21.05zM1372.05,1183.8h21.05V1273.26h-21.05zM1410.02,1183.8h21.05V1291.16h-21.05zM1447.98,1183.8h21.05V1362.74h-21.05zM1485.94,1183.8h21.05V1291.16h-21.05zM1523.91,1183.8h21.05V1273.26h-21.05zM1561.87,1183.8h21.05V1344.84h-21.05zM1599.84,1183.8h21.05V1237.48h-21.05zM1637.80,1183.8h21.05V1326.94h-21.05zM1675.76,1183.8h21.05V1273.26h-21.05zM1713.73,1183.8h21.05V1344.84h-21.05zM1751.69,1183.8h21.05V1362.74h-21.05zM1789.66,1183.8h21.05V1237.48h-21.05zM1827.62,1183.8h21.05V1344.84h-21.05zM1865.58,1183.8h21.05V1309.06h-21.05zM1903.55,1183.8h21.05V1255.38h-21.05zM1941.51,1183.8h21.05V1326.94h-21.05zM1979.48,1183.8h21.05V1326.94h-21.05zM2017.44,1183.8h21.05V1279.65h-21.05zM2055.40,1183.8h21.05V1326.94h-21.05zM2093.37,1183.8h21.05V1362.74h-21.05zM2131.33,1183.8h21.05V1309.06h-21.05zM2169.30,1183.8h21.05V1309.06h-21.05zM2207.26,1183.8h21.05V1309.06h-21.05zM2245.22,1183.8h21.05V1344.84h-21.05zM2283.19,1183.8h21.05V1326.94h-21.05zM2321.15,1183.8h21.05V1344.84h-21.05zM2359.12,1183.8h21.05V1326.94h-21.05zM2397.08,1183.8h21.05V1380.62h-21.05zM2435.04,1183.8h21.05V1326.94h-21.05zM2473.01,1183.8h21.05V1344.84h-21.05zM2510.97,1183.8h21.05V1309.06h-21.05zM2548.94,1183.8h21.05V1344.84h-21.05zM2586.90,1183.8h21.05V1452.20h-21.05z"/>
<rect x="527.50" y="1455.3" width="2" height="11" fill="#78909C"/>
<text x="481.75" y="1502.30" fill="#eef3fb" stroke="#eef3fb" stroke-width="0.5" text-anchor="start" style="font-size:24px">09:30:00</text>
<rect x="907.14" y="1455.3" width="2" height="11" fill="#78909C"/>
<text x="861.39" y="1502.30" fill="#eef3fb" stroke="#eef3fb" stroke-width="0.5" text-anchor="start" style="font-size:24px">09:35:00</text>
<rect x="1286.78" y="1455.3" width="2" height="11" fill="#78909C"/>
<text x="1241.03" y="1502.30" fill="#eef3fb" stroke="#eef3fb" stroke-width="0.5" text-anchor="start" style="font-size:24px">09:40:00</text>
<rect x="1666.42" y="1455.3" width="2" height="11" fill="#78909C"/>
<text x="1620.67" y="1502.30" fill="#eef3fb" stroke="#eef3fb" stroke-width="0.5" text-anchor="start" style="font-size:24px">09:45:00</text>
<rect x="2046.06" y="1455.3" width="2" height="11" fill="#78909C"/>
<text x="2000.31" y="1502.30" fill="#eef3fb" stroke="#eef3fb" stroke-width="0.5" text-anchor="start" style="font-size:24px">09:50:00</text>
<rect x="2425.70" y="1455.3" width="2" height="11" fill="#78909C"/>
<text x="2379.95" y="1502.30" fill="#eef3fb" stroke="#eef3fb" stroke-width="0.5" text-anchor="start" style="font-size:24px">09:55:00</text>
<rect x="1338" y="1518.2" width="24" height="24" rx="4" fill="#008FFB"/>
<text x="1366.08" y="1538.10" fill="#eef3fb" stroke="#eef3fb" stroke-width="0.5" text-anchor="start" style="font-size:24px">KT</text>
<rect x="1418.1" y="1518.2" width="24" height="24" rx="4" fill="#00E396"/>
<text x="1447.45" y="1538.10" fill="#eef3fb" stroke="#eef3fb" stroke-width="0.5" text-anchor="start" style="font-size:24px">SKT</text>
</svg>
<script>(function(){var w=window.innerWidth||2732;if(Math.abs(w-2732)>2){document.documentElement.style.zoom=w/2732;}})();</script>
</body></html>
